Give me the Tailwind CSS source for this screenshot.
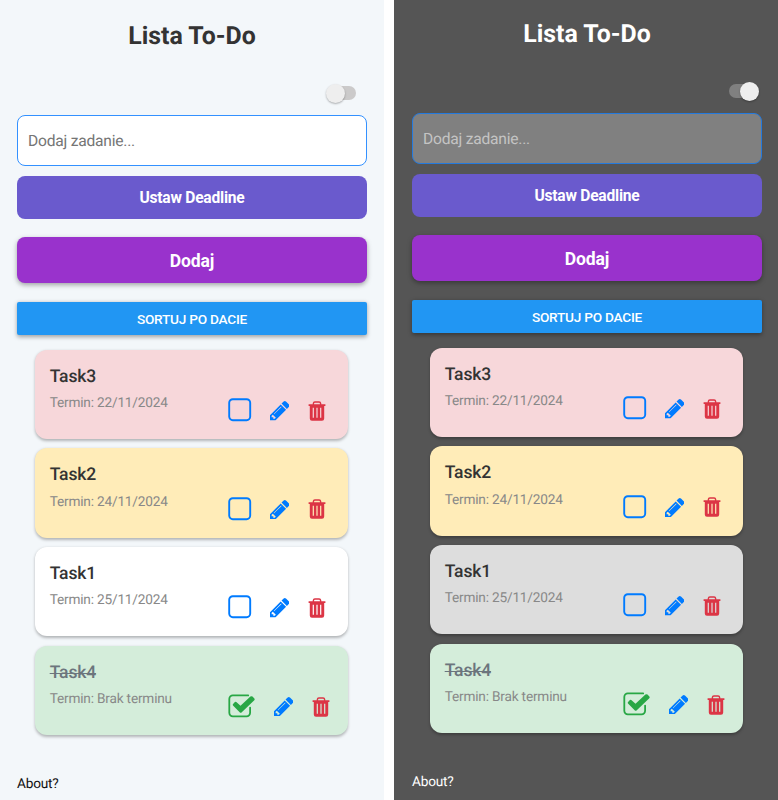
<!DOCTYPE html>
<html lang="pl">
<head>
<meta charset="utf-8">
<title>Lista To-Do</title>
<script src="https://cdn.jsdelivr.net/npm/@tailwindcss/browser@4"></script>
</head>
<body class="w-[778px] h-[800px] overflow-hidden bg-white font-['Roboto',sans-serif] [text-rendering:geometricPrecision]">
<svg class="hidden">
  <symbol id="box" viewBox="0 0 24 24"><rect x="1.2" y="1.2" width="21" height="21" rx="3.6" fill="none" stroke="currentColor" stroke-width="1.9"/></symbol>
  <symbol id="checked" viewBox="0 0 28 24"><path d="M20.2 1.4H4.8A3.5 3.5 0 0 0 1.3 4.9V18.800A3.500 3.500 0 0 0 4.800 22.300H18.600A3.500 3.500 0 0 0 22.100 18.800V13.600" fill="none" stroke="currentColor" stroke-width="1.8" stroke-linecap="round"/><path d="M5.100 9.900 6.900 8.100Q7.800 7.500 8.600 8.200L12.500 11.800 22.400 2.600Q23.500 1.800 24.500 2.600L26.400 4.500Q27.100 5.400 26.300 6.300L13.500 18.500Q12.700 19.100 11.900 18.400L5 11.600Q4.300 10.700 5.100 9.900Z" fill="currentColor"/></symbol>
  <symbol id="pencil" viewBox="128 149 1515 1515"><path fill="currentColor" d="M491 1536l91-91-235-235-91 91v107h128v128h107zM1014 608q0-22-22-22-10 0-17 7l-542 542q-7 7-7 17 0 22 22 22 10 0 17-7l542-542q7-7 7-17zM960 416l416 416-832 832h-416v-416zM1643 512q0 53-37 90l-166 166-416-416 166-165q36-38 90-38 53 0 91 38l235 234q37 39 37 91z"/></symbol>
  <symbol id="trash" viewBox="0 0 18 20"><path fill="currentColor" fill-rule="evenodd" d="M.6 3.300H4.700V2.300Q4.900.3 6.900.3H11.100Q13.100.3 13.300 2.300V3.300H17.400V4.900H16.200V17.500Q16.200 19.700 14 19.700H4Q1.800 19.700 1.800 17.500V4.900H.6ZM6.100 3.300H11.900V2.400Q11.800 1.700 11.100 1.700H6.900Q6.200 1.700 6.100 2.400ZM4.700 6.700V16.800H5.900V6.700ZM8.400 6.700V16.800H9.600V6.700ZM12.100 6.700V16.800H13.300V6.700Z"/></symbol>
</svg>
<main id="screens" class="flex gap-[10px] h-full"></main>
<script>
const themes = [
  { screen: 'w-[384px] h-full bg-[#f3f7fa] pt-[20px] pl-[17px] pr-[17px] flex flex-col',
    title: 'text-[#333333]', track: 'bg-[#cbcaca]', toggle: 'flex-row-reverse mr-[11px]',
    input: 'bg-white border-[#3391ff] text-[#757575]', plain: 'bg-white', about: 'text-[#111111]' },
  { screen: 'w-[384px] h-full bg-[#555555] pt-[18px] pl-[18px] pr-[16px] flex flex-col',
    title: 'text-white', track: 'bg-[#808080]', toggle: 'flex-row mr-[3px]',
    input: 'bg-[#808080] border-[#247ade] text-[#c4c4c4]', plain: 'bg-[#dddddd]', about: 'text-white' }
];
const tasks = [
  { name: 'Task3', due: '22/11/2024', bg: 'bg-[#f7d7da]' },
  { name: 'Task2', due: '24/11/2024', bg: 'bg-[#ffecb8]' },
  { name: 'Task1', due: '25/11/2024', bg: '' },
  { name: 'Task4', due: 'Brak terminu', bg: 'bg-[#d4edda]', done: true }
];
const card = (t, theme) => `
  <article class="relative h-[89.300px] w-[313px] rounded-[12px] pl-[14.700px] pt-[16px] shadow-[0_1.500px_3px_rgba(0,0,0,0.270)] ${t.bg || theme.plain}">
    <h2 class="text-[17.550px] tracking-[-0.150px] leading-[22px] font-medium ${t.done ? 'text-[#6c757d] line-through decoration-1' : 'text-[#333333]'}">${t.name}</h2>
    <p class="mt-[6.300px] text-[13.650px] tracking-[-0.190px] leading-[18px] text-[#888888]">Termin: ${t.due}</p>
    <div class="absolute left-[193px] top-[48.300px] flex items-start">
      ${t.done
        ? '<svg class="w-[28px] h-[24px] text-[#28a745]"><use href="#checked"/></svg>'
        : '<svg class="w-[24px] h-[24px] text-[#007bff]"><use href="#box"/></svg>'}
      <svg class="ml-[17.600px] mt-[3px] w-[19.500px] h-[19.500px] text-[#007bff]"><use href="#pencil"/></svg>
      <svg class="ml-[18.800px] mt-[2.700px] w-[18px] h-[20px] text-[#dc3545]"><use href="#trash"/></svg>
    </div>
  </article>`;
document.getElementById('screens').innerHTML = themes.map(theme => `
  <section class="${theme.screen}">
    <h1 class="h-[32px] text-center text-[24.900px] leading-[33px] font-bold ${theme.title}">Lista To-Do</h1>
    <div class="mt-[31px] h-[20px] flex items-center justify-end">
      <div class="flex items-center w-[30px] h-[19px] ${theme.toggle}">
        <span class="w-[24px] h-[13.500px] rounded-full shrink-0 ${theme.track}"></span>
        <span class="relative w-[19px] h-[19px] rounded-full shrink-0 -mx-[13px] bg-[#eeeeee] shadow-[0_1px_2px_rgba(0,0,0,0.300)]"></span>
      </div>
    </div>
    <div class="mt-[12px] h-[50.500px] rounded-[8px] border flex items-center pl-[10px] pt-[2px] text-[15.600px] tracking-[-0.220px] ${theme.input}">Dodaj zadanie...</div>
    <button class="mt-[10px] h-[43px] shrink-0 rounded-[8px] bg-[#6a5acd] text-white text-[15.600px] tracking-[-0.240px] font-bold pt-[3px]">Ustaw Deadline</button>
    <button class="mt-[18.500px] h-[46px] shrink-0 rounded-[8px] bg-[#9932cc] text-white text-[17.550px] tracking-[-0.100px] font-bold pt-[3px] shadow-[0_2px_5px_rgba(0,0,0,0.350)]">Dodaj</button>
    <button class="mt-[19px] h-[33.300px] shrink-0 rounded-[2px] bg-[#2196f3] text-white text-[13.650px] tracking-[-0.230px] font-medium pt-[2px] shadow-[0_1.500px_4px_rgba(0,0,0,0.350)]">SORTUJ PO DACIE</button>
    <div class="mt-[14.500px] ml-[18px] flex flex-col gap-[9.300px]">${tasks.map(t => card(t, theme)).join('')}</div>
    <a class="mt-[38.900px] text-[13.650px] tracking-[-0.200px] leading-[20px] ${theme.about}">About?</a>
  </section>`).join('');
</script>
</body>
</html>
